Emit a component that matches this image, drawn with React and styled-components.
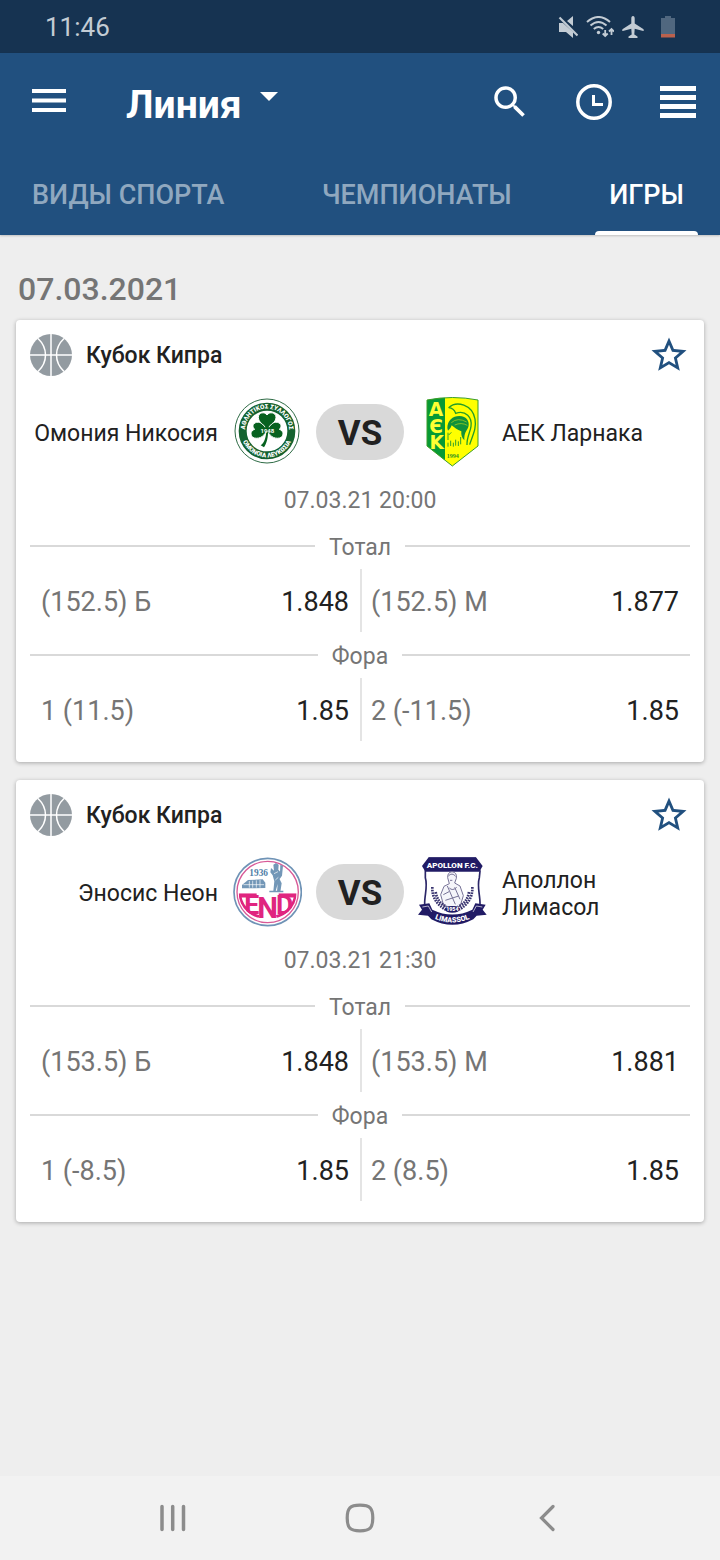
import React, { useState } from "react";
import styled, { createGlobalStyle } from "styled-components";
import { MdSearch, MdStarBorder, MdStar } from "react-icons/md";

const GlobalStyle = createGlobalStyle`
  * {
    box-sizing: border-box;
  }
  body {
    margin: 0;
    background: #eeeeee;
    color: #212121;
    font-family: Roboto, "Noto Sans", sans-serif;
  }
  button, select {
    margin: 0;
    padding: 0;
    border: 0;
    background: none;
    color: inherit;
    font: inherit;
    cursor: pointer;
  }
  svg {
    display: block;
    flex: none;
  }
`;

const Page = styled.div`
  min-height: 100vh;
  display: flex;
  flex-direction: column;
`;

const StatusBar = styled.div`
  height: 53px;
  padding: 0 44px 0 45px;
  display: flex;
  align-items: center;
  justify-content: space-between;
  background: #163351;
  color: #c3ccd4;
  font-size: 26px;
`;

const StatusIcons = styled.div`
  display: flex;
  align-items: center;
  gap: 8px;
`;

const Header = styled.header`
  background: #21507f;
  color: white;
  box-shadow: 0 1px 2px rgba(0, 0, 0, 0.2);
`;

const Toolbar = styled.div`
  height: 98px;
  display: flex;
  align-items: center;
`;

const IconButton = styled.button`
  width: ${props => props.$width}px;
  height: 84px;
  display: flex;
  align-items: center;
  justify-content: center;
`;

const ModePicker = styled.label`
  flex: 1;
  display: flex;
  align-items: center;
  gap: 18px;
  padding-left: 28px;
  svg {
    margin-bottom: 12px;
  }
  select {
    appearance: none;
    outline: none;
    font-size: 39px;
    font-weight: 700;
    line-height: 48px;
    padding-top: 6px;
  }
  option {
    color: #212121;
  }
`;

const TabList = styled.div`
  height: 84px;
  padding: 0 22px 0 18px;
  display: flex;
  justify-content: space-between;
`;

const Tab = styled.button`
  padding: 3px 14px 0;
  font-size: 27px;
  font-weight: 500;
  color: ${props => props.$active ? "white" : "#90a8bf"};
  position: relative;
  &::after {
    content: "";
    position: absolute;
    left: 0;
    right: 0;
    bottom: 0;
    height: 4px;
    border-radius: 4px 4px 0 0;
    background: ${props => props.$active ? "white" : "transparent"};
  }
`;

const Content = styled.main`
  flex: 1;
  padding: 36px 16px 18px;
`;

const DayTitle = styled.h2`
  margin: 0 0 13px;
  padding-left: 2px;
  font-size: 32px;
  font-weight: 500;
  line-height: 36px;
  color: #757575;
`;

const Card = styled.article`
  margin-bottom: 18px;
  padding: 14px 14px 21px;
  background: white;
  border-radius: 4px;
  box-shadow: 0 1px 4px rgba(0, 0, 0, 0.3);
`;

const CardHeader = styled.div`
  height: 42px;
  display: flex;
  align-items: center;
  gap: 14px;
  h3 {
    flex: 1;
    margin: 0;
    font-size: 23px;
    font-weight: 500;
  }
  button {
    color: #21507f;
  }
`;

const Teams = styled.div`
  margin-top: 20px;
  min-height: 72px;
  display: grid;
  grid-template-columns: 1fr 70px 88px 70px 1fr;
  align-items: center;
  gap: 14px;
`;

const TeamName = styled.span`
  padding-top: 3px;
  font-size: 23px;
  line-height: 27px;
  text-align: ${props => props.$side};
`;

const Versus = styled.span`
  height: 56px;
  border-radius: 28px;
  background: #d9d9d9;
  font-size: 35px;
  font-weight: 700;
  line-height: 60px;
  text-align: center;
`;

const StartTime = styled.time`
  display: block;
  margin: 19px 0 16px;
  font-size: 23px;
  line-height: 28px;
  text-align: center;
  color: #757575;
`;

const MarketTitle = styled.h4`
  height: 30px;
  margin: 0;
  display: flex;
  align-items: center;
  gap: 14px;
  font-size: 23px;
  font-weight: 400;
  color: #757575;
  span {
    padding-top: 2px;
  }
  &::before, &::after {
    content: "";
    flex: 1;
    height: 2px;
    background: #d9d9d9;
  }
`;

const OddsRow = styled.div`
  display: grid;
  grid-template-columns: 1fr 1fr;
  margin: 8px 0;
  &:last-child {
    margin-bottom: 0;
  }
`;

const Odd = styled.button`
  height: 63px;
  padding: 2px 11px 0;
  display: flex;
  align-items: center;
  justify-content: space-between;
  font-size: 27px;
  color: #757575;
  & + & {
    padding-left: 9px;
    border-left: 2px solid #e4e4e4;
  }
  b {
    font-weight: 400;
    color: #212121;
  }
`;

const SystemNav = styled.nav`
  height: 84px;
  padding: 0 80px;
  display: grid;
  grid-template-columns: repeat(3, 1fr);
  background: #f2f2f2;
  button {
    display: flex;
    align-items: center;
    justify-content: center;
  }
`;

const MuteIcon = () => (
  <svg width="20" height="22" viewBox="0 0 20 22" fill="#c3ccd4">
    <path d="M1 7h4l10 9v6l-7-6H1zM9 5l6-5v10z" />
    <path d="M1.500 1.500L19.500 19.500" stroke="#c3ccd4" strokeWidth="2.200" />
  </svg>
);

const WifiIcon = () => (
  <svg width="28" height="22" viewBox="0 0 28 22" fill="none" stroke="#c3ccd4" strokeWidth="2">
    <path d="M1 6Q12.500 -4 24 6M4.500 9.500Q12.500 2.500 20.500 9.500M7.800 13Q12.500 9 17.200 13" />
    <circle cx="12.500" cy="16.500" r="1.700" fill="#c3ccd4" stroke="none" />
    <path d="M19.200 14v6M16.700 17.500l2.500 2.500 2.500-2.500M25.500 19v-6M23 15.500l2.500-2.500 2.500 2.500" strokeWidth="1.800" />
  </svg>
);

const PlaneIcon = () => (
  <svg width="22" height="22" viewBox="0 0 22 22" fill="#c3ccd4">
    <path d="M11 0c1.200 0 1.700 1.300 1.700 2.500v5l8.500 5.500c.8.500.8 2.200 0 2l-8.500-2.300-.4 5.800 3.200 2v1.500H6.500v-1.500l3.200-2-.4-5.800L.8 15c-.8.200-.8-1.500 0-2l8.500-5.500v-5C9.300 1.300 9.800 0 11 0z" />
  </svg>
);

const BatteryIcon = () => (
  <svg width="24" height="22" viewBox="0 0 24 22">
    <path d="M13 0h6v2h4v16H9V2h4z" fill="#50677f" />
    <path d="M9 18h14v3.500H9z" fill="#bb614d" />
  </svg>
);

const MenuIcon = () => (
  <svg width="34" height="26" viewBox="0 0 34 26" fill="white">
    <path d="M0 0h34v4H0zM0 9.500h34v4H0zM0 19h34v4H0z" />
  </svg>
);

const ClockIcon = () => (
  <svg width="36" height="36" viewBox="0 0 36 36" fill="none" stroke="white">
    <circle cx="18" cy="18" r="16.200" strokeWidth="3.500" />
    <path d="M17.500 11v9.500H27" strokeWidth="3" />
  </svg>
);

const ListIcon = () => (
  <svg width="36" height="32" viewBox="0 0 36 32" fill="white">
    <path d="M0 0h36v5H0zM0 9h36v5H0zM0 18h36v5H0zM0 27h36v5H0z" />
  </svg>
);

const BallIcon = () => (
  <svg width="42" height="42" viewBox="0 0 42 42" fill="none" stroke="white" strokeWidth="1.500">
    <circle cx="21" cy="21" r="21" fill="#939ba1" stroke="none" />
    <path d="M21 0v42M0 21h42M8 4.500C18 14 18 28 8 37.500M34 4.500C24 14 24 28 34 37.500" />
  </svg>
);

const OmoniaCrest = () => (
  <svg width="70" height="70" viewBox="0 0 210 210">
    <defs>
      <path id="omoniaTop" d="M40 112a66 66 0 1 1 130 0" />
      <path id="omoniaBottom" d="M26 102a79 79 0 0 0 158 0" />
    </defs>
    <circle cx="105" cy="102" r="96" fill="white" stroke="#2e6b45" strokeWidth="3" />
    <circle cx="105" cy="102" r="73" fill="none" stroke="#14622f" strokeWidth="24" />
    <g fill="white" fontFamily="Roboto, sans-serif" fontSize="19" fontWeight="900" textAnchor="middle">
      <text><textPath href="#omoniaTop" startOffset="50%">ΑΘΛΗΤΙΚΟΣ ΣΥΛΛΟΓΟΣ</textPath></text>
      <text><textPath href="#omoniaBottom" startOffset="50%">ΟΜΟΝΟΙΑ ΛΕΥΚΩΣΙΑ</textPath></text>
    </g>
    <path d="M103 98h5C109 122 104 138 96 151L86 145C98 136 103 118 103 98z" fill="#07611f" />
    <g fill="#07611f" stroke="white" strokeWidth="3">
      <path d="M105 98C97 86 79 76 79 61C79 46 98 43 105 54C112 43 132 46 132 61C132 76 113 86 105 98z" />
      <path d="M105 98C95 85 88 73 74 76C60 79 61 92 68 97C53 101 54 120 67 123C85 127 99 115 105 98z" />
      <path d="M105 98C115 85 122 73 136 76C150 79 149 92 142 97C157 101 156 120 143 123C125 127 111 115 105 98z" />
    </g>
    <circle cx="105" cy="98" r="9" fill="#07611f" />
    <text x="106" y="107" fill="white" fontFamily="Roboto, sans-serif" fontSize="18" fontWeight="700" textAnchor="middle">1948</text>
  </svg>
);

const AekCrest = () => (
  <svg width="70" height="70" viewBox="0 0 210 210">
    <path d="M27 9Q103 -6 180 9V147L103 207L27 147z" fill="#ffff00" />
    <path d="M27 9Q53 3 81 2V190L27 147z" fill="#079a35" />
    <path d="M27 9Q103 -6 180 9V147L103 207L27 147z" fill="none" stroke="#3a9d2b" strokeWidth="3" />
    <g fill="#ffff33" fontFamily="DejaVu Sans, sans-serif" fontSize="56" fontWeight="700" textAnchor="middle">
      <text x="54" y="56">A</text>
      <text x="54" y="107">Є</text>
      <text x="56" y="157">K</text>
    </g>
    <g fill="none" stroke="#249d28" strokeWidth="4">
      <path d="M92 32C116 10 163 23 171 66C176 96 164 114 155 143" />
      <path d="M92 32C104 33 109 38 113 49C144 38 163 63 159 88C157 105 146 121 147 144" />
    </g>
    <path d="M88 93C88 71 104 57 124 57C146 57 156 74 151 90C146 102 138 107 139 130C131 122 129 113 130 103C118 99 108 91 101 85C98 94 93 98 90 101z" fill="#11913a" />
    <path d="M100 77Q119 60 146 75M110 84Q130 75 148 85" fill="none" stroke="#b9d81b" strokeWidth="2" />
    <path d="M90 107v22M90 137v12M98 131v16M106 137v12M113 128v18M121 133v14M128 120v22M92 114l8-8" fill="none" stroke="#31a12a" strokeWidth="3" />
    <text x="104" y="182" fill="#2c8f24" fontFamily="Liberation Serif, serif" fontSize="18" fontWeight="700" textAnchor="middle">1994</text>
  </svg>
);

const EnosisCrest = () => (
  <svg width="70" height="70" viewBox="0 0 210 210">
    <defs>
      <clipPath id="enosisBowl"><path d="M20 109H194A87 78 0 0 1 20 109z" /></clipPath>
    </defs>
    <circle cx="107" cy="105" r="101" fill="white" stroke="#6f93b6" strokeWidth="5" />
    <circle cx="107" cy="105" r="92" fill="none" stroke="#d85a97" strokeWidth="4" />
    <g clipPath="url(#enosisBowl)">
      <path d="M20 109A87 78 0 0 0 80 182M194 109A87 78 0 0 1 134 182M20 114H74M140 114H194" fill="none" stroke="#e0257f" strokeWidth="15" />
      <g fill="#e0257f" fontFamily="Roboto, sans-serif" fontWeight="700" textAnchor="middle">
        <text x="59" y="170" fontSize="80">E</text>
        <text x="107" y="182" fontSize="88">N</text>
        <text x="158" y="170" fontSize="80">D</text>
      </g>
    </g>
    <text x="80" y="56" fill="#5381a8" fontFamily="Liberation Serif, serif" fontSize="28" fontWeight="700" textAnchor="middle">1936</text>
    <g fill="#7397b7">
      <path d="M30 84L48 69L92 67L100 77V93L30 94z" />
      <path d="M124 23l8-5 8 5-1 15 8 9-4 20 6 12-4 26h-10l2-24-6 21h-7l3-29-5-18-7-9 2-13 9 8z" />
      <path d="M112 101h42v5h-42zM145 23l8 3-3 30-7 10z" />
    </g>
    <path d="M34 83h62M52 72v20M62 71v21M73 70v22M84 69v23M126 50l12-6M130 69l9-8" stroke="white" strokeWidth="2" />
  </svg>
);

const ApollonCrest = () => (
  <svg width="70" height="70" viewBox="0 0 210 210">
    <defs>
      <path id="apollonRibbon" d="M39 180Q103 213 167 180" />
    </defs>
    <path d="M22 42L34 4H172L186 42L184 62C176 88 187 116 186 141Q183 165 103 194Q23 165 20 141C19 116 30 88 22 62z" fill="white" stroke="#2b2668" strokeWidth="5" />
    <path d="M32 1H174L194 27L184 44H22L12 27z" fill="#211b65" />
    <text x="103" y="32" fill="white" fontFamily="Roboto, sans-serif" fontSize="24" fontWeight="900" textAnchor="middle">APOLLON F.C.</text>
    <g fill="#f5f5fa" stroke="#777397" strokeWidth="3">
      <path d="M89 62Q88 46 102 44Q118 46 115 64L110 78L126 87L136 116L126 149H78L68 113L78 88L94 80z" />
      <path d="M91 57Q102 45 113 58M96 70h7M88 87L112 142M76 113L93 104M110 91L126 127M82 130L122 117M94 93Q104 103 116 91" fill="none" />
    </g>
    <g fill="none" stroke="#39346f" strokeWidth="8" strokeDasharray="5 3">
      <path d="M43 90Q41 134 83 158M163 90Q165 134 123 158M53 105Q58 137 86 149M153 105Q148 137 120 149" />
    </g>
    <path d="M3 143L34 139L43 158Q103 187 163 158L172 139L203 143L194 158L206 173L176 176L166 187Q103 220 40 187L30 176L0 173L12 158z" fill="#211b65" />
    <path d="M13 150l18-3 10 18M193 150l-18-3-10 18" fill="none" stroke="white" strokeWidth="2" />
    <ellipse cx="103" cy="157" rx="23" ry="10" fill="#211b65" />
    <g fill="white" fontFamily="Roboto, sans-serif" fontWeight="900" textAnchor="middle">
      <text x="103" y="163" fontSize="16">1954</text>
      <text fontSize="22"><textPath href="#apollonRibbon" startOffset="50%">LIMASSOL</textPath></text>
    </g>
  </svg>
);

const tabs = ["ВИДЫ СПОРТА", "ЧЕМПИОНАТЫ", "ИГРЫ"];

const games = [
  {
    league: "Кубок Кипра",
    home: "Омония Никосия",
    away: "АЕК Ларнака",
    HomeCrest: OmoniaCrest,
    AwayCrest: AekCrest,
    time: "07.03.21 20:00",
    markets: [
      { title: "Тотал", odds: [["(152.5) Б", "1.848"], ["(152.5) М", "1.877"]] },
      { title: "Фора", odds: [["1 (11.5)", "1.85"], ["2 (-11.5)", "1.85"]] }
    ]
  },
  {
    league: "Кубок Кипра",
    home: "Эносис Неон",
    away: "Аполлон Лимасол",
    HomeCrest: EnosisCrest,
    AwayCrest: ApollonCrest,
    time: "07.03.21 21:30",
    markets: [
      { title: "Тотал", odds: [["(153.5) Б", "1.848"], ["(153.5) М", "1.881"]] },
      { title: "Фора", odds: [["1 (-8.5)", "1.85"], ["2 (8.5)", "1.85"]] }
    ]
  }
];

const GameCard = ({ game }) => {
  const [favorite, setFavorite] = useState(false);
  const { HomeCrest, AwayCrest } = game;

  return (
    <Card>
      <CardHeader>
        <BallIcon />
        <h3>{game.league}</h3>
        <button aria-label="В избранное" aria-pressed={favorite} onClick={() => setFavorite(!favorite)}>
          {favorite ? <MdStar size={42} /> : <MdStarBorder size={42} />}
        </button>
      </CardHeader>
      <Teams>
        <TeamName $side="right">{game.home}</TeamName>
        <HomeCrest />
        <Versus>VS</Versus>
        <AwayCrest />
        <TeamName $side="left">{game.away}</TeamName>
      </Teams>
      <StartTime>{game.time}</StartTime>
      {game.markets.map(market => (
        <React.Fragment key={market.title}>
          <MarketTitle><span>{market.title}</span></MarketTitle>
          <OddsRow>
            {market.odds.map(([label, value]) => (
              <Odd key={label}>
                <span>{label}</span>
                <b>{value}</b>
              </Odd>
            ))}
          </OddsRow>
        </React.Fragment>
      ))}
    </Card>
  );
};

const App = () => {
  const [activeTab, setActiveTab] = useState("ИГРЫ");

  return (
    <Page>
      <GlobalStyle />
      <StatusBar>
        <span>11:46</span>
        <StatusIcons>
          <MuteIcon />
          <WifiIcon />
          <PlaneIcon />
          <BatteryIcon />
        </StatusIcons>
      </StatusBar>
      <Header>
        <Toolbar>
          <IconButton $width={98} aria-label="Меню"><MenuIcon /></IconButton>
          <ModePicker>
            <select aria-label="Раздел">
              <option>Линия</option>
            </select>
            <svg width="18" height="9" viewBox="0 0 18 9" fill="white"><path d="M0 0h18L9 9z" /></svg>
          </ModePicker>
          <IconButton $width={84} aria-label="Поиск"><MdSearch size={42} /></IconButton>
          <IconButton $width={84} aria-label="Время"><ClockIcon /></IconButton>
          <IconButton $width={84} aria-label="Вид списка"><ListIcon /></IconButton>
        </Toolbar>
        <TabList role="tablist">
          {tabs.map(tab => (
            <Tab
              key={tab}
              role="tab"
              aria-selected={tab === activeTab}
              $active={tab === activeTab}
              onClick={() => setActiveTab(tab)}
            >
              {tab}
            </Tab>
          ))}
        </TabList>
      </Header>
      <Content>
        <DayTitle>07.03.2021</DayTitle>
        {games.map(game => <GameCard key={game.home} game={game} />)}
      </Content>
      <SystemNav>
        <button aria-label="Недавние">
          <svg width="28" height="28" viewBox="0 0 28 28" stroke="#8c8c8c" strokeWidth="3.500" strokeLinecap="round">
            <path d="M3 2.500v23M13.700 2.500v23M24.500 2.500v23" />
          </svg>
        </button>
        <button aria-label="Домой">
          <svg width="30" height="30" viewBox="0 0 30 30" fill="none" stroke="#8c8c8c" strokeWidth="3.200">
            <path d="M15 2.200C25 2.200 27.800 5 27.800 15S25 27.800 15 27.800 2.200 25 2.200 15 5 2.200 15 2.200z" />
          </svg>
        </button>
        <button aria-label="Назад">
          <svg width="16" height="28" viewBox="0 0 16 28" fill="none" stroke="#8c8c8c" strokeWidth="3.200" strokeLinecap="round">
            <path d="M14 2.500L2.500 14L14 25.500" />
          </svg>
        </button>
      </SystemNav>
    </Page>
  );
};

export default App;
